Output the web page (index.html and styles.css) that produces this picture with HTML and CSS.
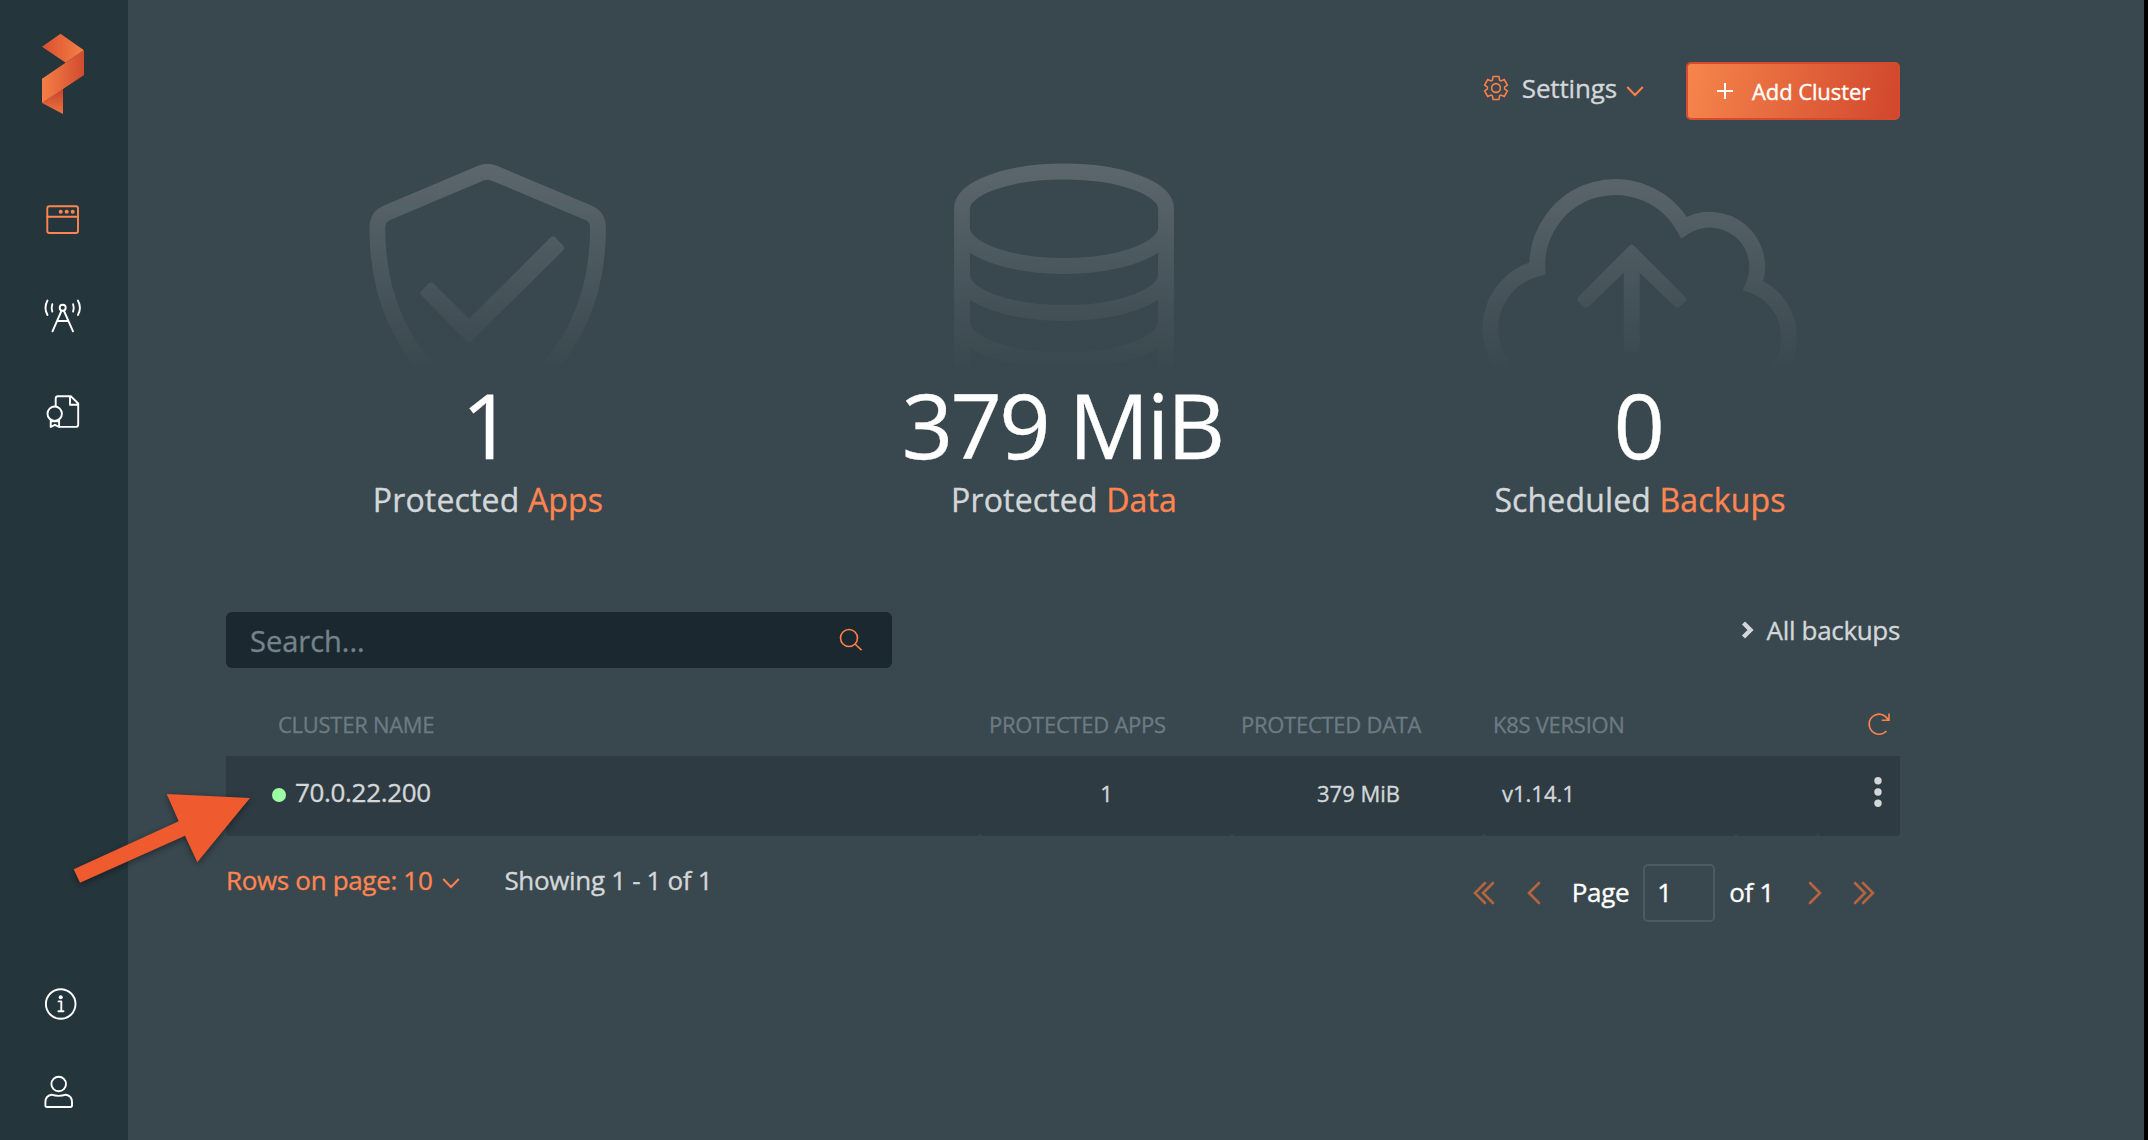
FILE: index.html
```html
<!DOCTYPE html>
<html lang="en">
<head>
<meta charset="utf-8">
<title>Clusters</title>
<link rel="stylesheet" href="styles.css">
</head>
<body>
<div class="app">
  <aside class="sidebar">
    <svg class="logo" width="128" height="172" viewBox="0 0 128 172">
      <defs>
        <linearGradient id="fold-top"><stop offset="0" stop-color="#d9502f"/><stop offset="1" stop-color="#f58048"/></linearGradient>
        <linearGradient id="fold-mid"><stop offset="0" stop-color="#f57f47"/><stop offset="1" stop-color="#d24c2f"/></linearGradient>
        <linearGradient id="fold-end" x1="0" y1="0" x2="0" y2="1"><stop offset="0.1" stop-color="#c9472d"/><stop offset="1" stop-color="#ec743f"/></linearGradient>
      </defs>
      <path fill="url(#fold-end)" d="M63 88.5V114L42 103z"/>
      <path fill="url(#fold-top)" d="M60.500 33.700 84 50.300 65.700 62.700 42 46.700z"/>
      <path fill="url(#fold-mid)" d="M84 50.300V75L42 103V78.700z"/>
    </svg>
    <nav class="nav">
      <a class="nav-item active"><svg width="128" height="96" viewBox="0 172 128 96">
        <rect x="47.300" y="206.300" width="30.700" height="26.700" rx="2"/><path d="M47.300 216.700H78"/>
        <g class="solid"><circle cx="60.700" cy="211.700" r="2"/><circle cx="66.700" cy="211.700" r="2"/><circle cx="72.700" cy="211.700" r="2"/></g>
      </svg></a>
      <a class="nav-item"><svg width="128" height="96" viewBox="0 268 128 96">
        <circle cx="62.700" cy="307.700" r="3"/><path d="M61.400 311 52.500 331.300M64 311 73 331.300M57.500 321H68M52.300 304.200q-1.300 3.800 0 7.400M73.100 304.200q1.300 3.800 0 7.400M47.500 300.500q-4 7.200 0 14.500M77.900 300.500q4 7.200 0 14.500"/>
      </svg></a>
      <a class="nav-item"><svg width="128" height="96" viewBox="0 364 128 96">
        <path d="M55.700 406V398.500Q55.700 396.300 58 396.300H71L78.200 403.500V424.500Q78.200 426.900 76 426.900H59M70 396.500V404.700H78M50.700 420.500V427L54.900 424.800 59.100 427V420.500M51 421.300H59"/><circle cx="54.700" cy="413.700" r="7.200"/>
      </svg></a>
    </nav>
    <nav class="nav nav-bottom">
      <a class="nav-item"><svg width="128" height="96" viewBox="0 956 128 96">
        <circle cx="60.700" cy="1004" r="14.800"/><path d="M58.600 1001.400H61.300V1011M58.400 1011.300H63.500"/><circle class="solid" cx="60.700" cy="997.200" r="2"/>
      </svg></a>
      <a class="nav-item"><svg width="128" height="88" viewBox="0 1052 128 88">
        <circle cx="58.700" cy="1084" r="7.300"/><path d="M51.500 1094.700Q58.700 1097 65.900 1094.700C70 1095.500 72 1098.500 72 1102V1105.500Q72 1107 70.400 1107H47Q45.400 1107 45.400 1105.500V1102C45.400 1098.500 47.400 1095.500 51.500 1094.700z"/>
      </svg></a>
    </nav>
  </aside>

  <main class="main">
    <header class="topbar">
      <a class="settings">
        <svg class="line" width="26" height="28" viewBox="-13 -14 26 28"><path transform="scale(.95)" d="M-3.800-8.200-3-12H3L3.800-8.200 5.200-7.400 8.700-8.900 12-3.100 9-.8V.8L12 3.100 8.700 8.900 5.200 7.400 3.800 8.200 3 12H-3L-3.800 8.200-5.200 7.400-8.700 8.900-12 3.100-9 .8V-.8L-12-3.100-8.700-8.900-5.200-7.400z"/><circle r="4.400"/></svg>
        <span>Settings</span>
        <svg class="line caret" width="18" height="12" viewBox="0 0 18 12"><path d="M1.200 2 9 10 16.800 2"/></svg>
      </a>
      <button class="add"><svg width="18" height="18" viewBox="0 0 18 18"><path d="M9 1V17M1 9H17"/></svg><span>Add Cluster</span></button>
    </header>

    <section class="stats">
      <div class="stat">
        <svg class="ghost" width="340" height="216" viewBox="318 160 340 216">
          <path d="M480 173.500Q487.500 170 495 173.500L589 213Q598 217 598 228C598 300 570 350 533 384M480 173.500 386.500 213Q377.300 217 377.300 228C377.300 300 405 350 442 384"/>
          <path class="blunt" d="M431 286.700 469 324.600 553 240.700 560 248 469 338 424.700 293z"/>
        </svg>
        <div class="value">1</div>
        <div class="label">Protected <em>Apps</em></div>
      </div>
      <div class="stat">
        <svg class="ghost" width="340" height="216" viewBox="894 160 340 216">
          <path d="M962 380V208.500A102 37 0 0 1 1166 208.500V380M962 228A102 38 0 0 0 1166 228M962 275A102 38 0 0 0 1166 275M962 322.500A102 38 0 0 0 1166 322.500"/>
        </svg>
        <div class="value">379 MiB</div>
        <div class="label">Protected <em>Data</em></div>
      </div>
      <div class="stat">
        <svg class="ghost" width="340" height="216" viewBox="1470 160 340 216">
          <path d="M1515.300 378A61.700 61.700 0 0 1 1537.400 268.500A78.200 78.200 0 0 1 1684 227.500A47.200 47.200 0 0 1 1753.300 285.700A54.300 54.300 0 0 1 1770 378"/>
          <path class="blunt" d="M1631.700 249 1581.500 299.300 1586 303.500 1631.700 259.600 1677.400 303.500 1682 299.300zM1627.700 262H1635.700V347.700H1627.700z"/>
        </svg>
        <div class="value">0</div>
        <div class="label">Scheduled <em>Backups</em></div>
      </div>
    </section>

    <div class="toolbar">
      <label class="search"><input type="text" placeholder="Search..."><svg class="line" width="28" height="28" viewBox="0 0 28 28"><circle cx="11" cy="12" r="8.500"/><path d="M17 18 23.600 24.200"/></svg></label>
      <a class="all"><svg width="14" height="20" viewBox="0 0 14 20"><path d="M3.500 3 10.500 10 3.500 17"/></svg><span>All backups</span></a>
    </div>

    <section class="table">
      <div class="row head">
        <div class="cell name">Cluster name</div>
        <div class="cell">Protected apps</div>
        <div class="cell">Protected data</div>
        <div class="cell">K8s version</div>
        <div class="cell"></div>
        <div class="cell tool"><svg class="line" width="26" height="26" viewBox="0 0 26 26"><path d="M20.500 20A10 10 0 1 1 22 8.500M23 2.600V9.200H15.800"/></svg></div>
      </div>
      <div class="row data">
        <div class="cell name"><i class="status"></i><span>70.0.22.200</span></div>
        <div class="cell num">1</div>
        <div class="cell num">379 MiB</div>
        <div class="cell version">v1.14.1</div>
        <div class="cell"></div>
        <div class="cell tool"><svg class="kebab" width="8" height="32" viewBox="0 0 8 32"><circle cx="4" cy="4.700" r="3.700"/><circle cx="4" cy="16" r="3.700"/><circle cx="4" cy="27.200" r="3.700"/></svg></div>
      </div>
    </section>

    <footer class="footer">
      <a class="rows">Rows on page: 10<svg class="line caret" width="18" height="12" viewBox="0 0 18 12"><path d="M1.200 2 9 10 16.800 2"/></svg></a>
      <span class="showing">Showing 1 - 1 of 1</span>
      <div class="pager">
        <svg class="step" width="24" height="24" viewBox="0 0 24 24"><path d="M13 2 3 12 13 22M21 2 11 12 21 22"/></svg>
        <svg class="step prev" width="16" height="24" viewBox="0 0 16 24"><path d="M13 2 3 12 13 22"/></svg>
        <span class="page">Page</span>
        <input class="page-no" type="text" value="1">
        <span class="of">of 1</span>
        <svg class="step next" width="16" height="24" viewBox="0 0 16 24"><path d="M3 2 13 12 3 22"/></svg>
        <svg class="step last" width="24" height="24" viewBox="0 0 24 24"><path d="M3 2 13 12 3 22M11 2 21 12 11 22"/></svg>
      </div>
    </footer>
  </main>
  <svg class="pointer" width="190" height="100" viewBox="67 790 190 100"><path d="M250 798 166.700 794 178.700 821.300 73.700 869.300 80 882.700 185 835.700 197.300 862.300z"/></svg>
</div>
</body>
</html>
```
FILE: styles.css
```css
* { box-sizing: border-box; }
body {
  margin: 0;
  background: #000;
  color: #d3d7d9;
  font: 26px/36px "Open Sans", "Noto Sans", sans-serif;
  letter-spacing: -.33px;
  -webkit-text-stroke: .35px currentColor;
}
svg { display: block; flex: none; }
.app {
  position: relative;
  display: flex;
  width: 2144px;
  height: 1140px;
  background: #39474e;
  overflow: hidden;
}

.sidebar {
  display: flex;
  flex-direction: column;
  width: 128px;
  background: #25353c;
}
.nav-item {
  display: block;
  fill: none;
  stroke: #fff;
  stroke-width: 1.9;
  stroke-linecap: round;
  stroke-linejoin: round;
  color: #fff;
}
.nav-item.active { stroke: #ff8550; color: #ff8550; }
.nav-item .solid { fill: currentColor; stroke: none; }
.nav-bottom { margin-top: auto; }

.main {
  flex: 1;
  padding: 62px 244px 0 98px;
}
.line { fill: none; stroke: #ff8048; stroke-width: 1.6; }
.topbar {
  display: flex;
  justify-content: flex-end;
  align-items: flex-start;
  height: 58px;
}
.settings {
  display: flex;
  align-items: center;
  height: 52px;
  margin-right: 42px;
  letter-spacing: -.15px;
}
.settings span { margin: 0 9px 0 13px; }
.caret { stroke-width: 2; position: relative; top: 3px; }
.add {
  display: flex;
  align-items: center;
  gap: 18px;
  width: 214px;
  height: 58px;
  padding: 0 0 0 28px;
  border: 2px solid #d64b2f;
  border-radius: 5px;
  background: linear-gradient(100deg, #f6854b, #d1472d);
  color: #fff;
  font: inherit;
  font-size: 22px;
  letter-spacing: -.1px;
}
.add svg { fill: none; stroke: #fff; stroke-width: 2; }

.stats {
  display: grid;
  grid-template-columns: repeat(3, 576px);
  margin: 40px -28px 0 -26px;
  text-align: center;
}
.ghost {
  margin: 0 auto;
  fill: none;
  stroke: #fff;
  stroke-width: 15.8;
  -webkit-mask-image: linear-gradient(rgba(0, 0, 0, .18), transparent 99%);
  mask-image: linear-gradient(rgba(0, 0, 0, .18), transparent 99%);
}
.ghost .blunt { fill: #fff; stroke-width: 8; stroke-linejoin: round; }
.value {
  padding-right: 4px;
  font-size: 90px;
  line-height: 96px;
  letter-spacing: -2.7px;
  color: #fff;
}
.label { font-size: 32px; line-height: 56px; letter-spacing: .15px; }
.label em { font-style: normal; color: #ff8550; }

.toolbar {
  display: flex;
  justify-content: space-between;
  align-items: flex-start;
  margin-top: 84px;
}
.search {
  display: flex;
  align-items: center;
  width: 666px;
  height: 56px;
  padding: 0 26px 0 24px;
  border-radius: 6px;
  background: #1b282f;
}
.search input {
  flex: 1;
  padding: 1px 0 0;
  border: 0;
  background: none;
  color: inherit;
  font: inherit;
  font-size: 29px;
  letter-spacing: 0;
}
.search input::placeholder { color: #74838b; opacity: 1; }
.all { display: flex; align-items: center; gap: 13px; }
.all svg { fill: none; stroke: #d3d7d9; stroke-width: 4.4; }

.row {
  display: grid;
  grid-template-columns: 754px 252px 252px 252px 82px 82px;
  font-size: 22px;
  letter-spacing: 0;
}
.head {
  height: 64px;
  margin-top: 24px;
  color: #6b7b83;
  letter-spacing: -.27px;
  text-transform: uppercase;
}
.head .cell { display: flex; align-items: center; padding: 0 0 1px 9px; }
.head .name { padding-left: 52px; }
.data { height: 80px; }
.data .cell {
  padding-top: 19px;
  background: #2e3b42;
  border-radius: 0 0 4px 4px;
}
.data .name {
  display: flex;
  padding: 18px 0 0 46px;
  font-size: 26px;
  letter-spacing: -.33px;
}
.status {
  width: 14px;
  height: 14px;
  margin: 14px 9px 0 0;
  border-radius: 50%;
  background: #9dffa3;
}
.data .num { text-align: center; padding-left: 1px; }
.version { padding-left: 18px; }
.head .tool { padding-left: 48px; }
.data .tool { padding: 20px 0 0 56px; }
.kebab { fill: #d3d7d9; }

.footer { display: flex; }
.rows {
  display: flex;
  align-items: center;
  gap: 10px;
  height: 36px;
  margin: 26px 44px 0 0;
  color: #ff8550;
}
.showing { margin-top: 26px; }
.pager {
  display: flex;
  align-items: center;
  height: 58px;
  margin: 28px 24px 0 auto;
  color: #fff;
}
.step { fill: none; stroke: #b5653f; stroke-width: 2.6; stroke-linecap: round; }
.prev { margin-left: 30px; }
.page { margin: -2px 14px 0 30px; }
.page-no {
  width: 72px;
  height: 58px;
  padding: 0 0 3px 12px;
  border: 2px solid #4c5b62;
  border-radius: 5px;
  background: none;
  color: #fff;
  font: inherit;
}
.of { margin: -2px 33px 0 14px; }
.last { margin-left: 29px; }

/* annotation arrow lying over the sidebar and the table */
.pointer {
  position: absolute;
  left: 67px;
  top: 790px;
  fill: #f05a2f;
  overflow: visible;
  filter: drop-shadow(0 2px 3px rgba(0, 0, 0, .4));
}
```
